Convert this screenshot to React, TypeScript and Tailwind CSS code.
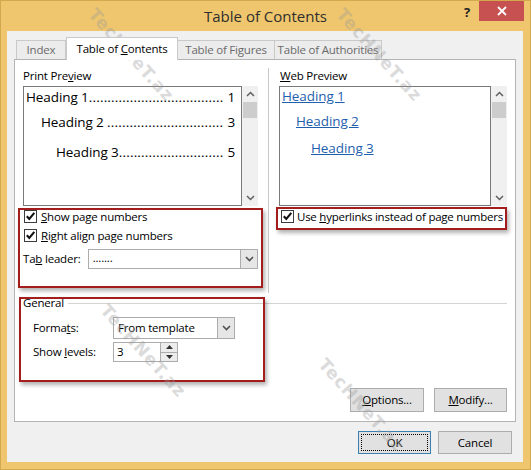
import React from "react";

function Check() {
  return (
    <span className="w-[13px] h-[13px] border border-[#3c3c3c] bg-white flex items-center justify-center shrink-0">
      <svg width="11" height="11" viewBox="0 0 11 11">
        <path d="M1.8 5.2 L4.3 7.9 L9.3 1.9" stroke="#111" strokeWidth="2.1" fill="none" />
      </svg>
    </span>
  );
}

function Chevron({ up = false }: { up?: boolean }) {
  return (
    <svg width="9" height="6" viewBox="0 0 9 6">
      <path
        d={up ? "M1 5 L4.5 1.5 L8 5" : "M1 1 L4.5 4.5 L8 1"}
        stroke="#606060"
        strokeWidth="1.5"
        fill="none"
      />
    </svg>
  );
}

function ScrollBar() {
  return (
    <div className="w-[16px] bg-[#f0f0f0] flex flex-col">
      <div className="h-[16px] flex items-center justify-center">
        <Chevron up />
      </div>
      <div className="h-[16px] bg-[#cdcdcd] mx-[1px]" />
      <div className="flex-1" />
      <div className="h-[16px] flex items-center justify-center">
        <Chevron />
      </div>
    </div>
  );
}

function DropBtn() {
  return (
    <div className="w-[17px] bg-[#e6e6e6] border-l border-[#acacac] flex items-center justify-center">
      <svg width="9" height="6" viewBox="0 0 9 6">
        <path d="M1 1 L4.5 4.5 L8 1" stroke="#505050" strokeWidth="1.6" fill="none" />
      </svg>
    </div>
  );
}

function Dots({ n }: { n: number }) {
  return (
    <span className="flex-1 min-w-0 whitespace-nowrap overflow-hidden tracking-[0.2px]">
      {".".repeat(n)}
    </span>
  );
}

function Watermark({ cls }: { cls: string }) {
  return (
    <div
      className={
        "absolute pointer-events-none origin-top-left rotate-[48deg] text-[17px] font-bold tracking-[1px] text-[#9a9a9a] opacity-35 font-['DejaVu_Sans',sans-serif] " +
        cls
      }
    >
      TecHNeT.az
    </div>
  );
}

export default function App() {
  return (
    <div className="relative w-[531px] h-[470px] bg-[#efc66d] border border-[#d3a94e] font-['Open_Sans','Noto_Sans',sans-serif] text-[11.5px] tracking-[-0.2px] text-black overflow-hidden whitespace-nowrap">
      {/* Title bar */}
      <div className="h-[30px] grid grid-cols-[1fr_auto_1fr]">
        <div />
        <div className="pt-[4px] text-[15px] tracking-normal leading-[22px] text-[#2e2e2e]">Table of Contents</div>
        <div className="flex justify-end items-start">
          <div className="mr-[9px] mt-[4px] text-[13px] font-bold leading-[14px] text-[#222]">?</div>
          <div className="w-[45px] h-[20px] bg-[#c75050] flex items-center justify-center mr-[6px]">
            <svg width="10" height="10" viewBox="0 0 10 10">
              <path d="M1 1 L9 9 M9 1 L1 9" stroke="#fff" strokeWidth="1.8" />
            </svg>
          </div>
        </div>
      </div>

      {/* Client area */}
      <div className="ml-[6px] w-[516px] h-[431px] bg-[#f0f0f0] pl-[7px] pr-[7px] pt-[6px]">
        {/* Tabs */}
        <div className="h-[22px] flex items-end pl-[2px]">
          <div className="h-[19px] w-[50px] border border-b-0 border-[#c9c9c9] bg-[#ececec] text-[#6a6a6a] flex items-center justify-center">
            <span>Index</span>
          </div>
          <div className="relative z-10 h-[23px] -mb-[1px] w-[112px] border border-b-0 border-[#c9c9c9] bg-white flex items-start pt-[2px] justify-center">
            <span>
              Table of <span className="underline">C</span>ontents
            </span>
          </div>
          <div className="h-[19px] w-[97px] border border-b-0 border-l-0 border-[#c9c9c9] bg-[#ececec] text-[#6a6a6a] flex items-center justify-center">
            <span>Table of Figures</span>
          </div>
          <div className="h-[19px] w-[107px] border border-b-0 border-l-0 border-[#c9c9c9] bg-[#ececec] text-[#6a6a6a] flex items-center justify-center">
            <span>Table of Authorities</span>
          </div>
        </div>

        {/* Panel */}
        <div className="h-[363px] border border-[#b4b4b4] bg-white pt-[8px] pl-[8px] pr-[8px]">
          <div className="flex h-[225px]">
            {/* Left column */}
            <div className="w-[235px] flex flex-col">
              <div className="leading-[15px] mb-[3px]">
                Print Pre<span className="underline">v</span>iew
              </div>
              <div className="flex h-[120px]">
                <div className="w-[219px] border border-[#7a7a7a] bg-white pl-[2px] pr-[6px] text-[13.5px] tracking-[-0.1px] leading-[18px]">
                  <div className="flex h-[20px] items-center">
                    <span>Heading 1</span>
                    <Dots n={60} />
                    <span>&nbsp;1</span>
                  </div>
                  <div className="flex mt-[5px] h-[20px] pl-[15px] items-center">
                    <span>Heading 2&nbsp;</span>
                    <Dots n={60} />
                    <span>&nbsp;3</span>
                  </div>
                  <div className="flex mt-[10px] h-[20px] pl-[30px] items-center">
                    <span>Heading 3</span>
                    <Dots n={60} />
                    <span>&nbsp;5</span>
                  </div>
                </div>
                <ScrollBar />
              </div>
              <div className="mt-[4px] h-[13px] flex items-center gap-[4px] pl-[1px]">
                <Check />
                <span className="leading-[13px]">
                  <span className="underline">S</span>how page numbers
                </span>
              </div>
              <div className="mt-[6px] h-[13px] flex items-center gap-[4px] pl-[1px]">
                <Check />
                <span className="leading-[13px]">
                  <span className="underline">R</span>ight align page numbers
                </span>
              </div>
              <div className="mt-[7px] h-[20px] flex items-center">
                <span className="w-[65px]">
                  Ta<span className="underline">b</span> leader:
                </span>
                <div className="w-[171px] h-[20px] border border-[#acacac] bg-white flex">
                  <div className="flex-1 pl-[4px] leading-[16px]">.......</div>
                  <DropBtn />
                </div>
              </div>
            </div>

            {/* Separator */}
            <div className="ml-[10px] w-px bg-[#c8c8c8]" />

            {/* Right column */}
            <div className="ml-[10px] w-[228px] flex flex-col">
              <div className="leading-[15px] mb-[3px] pl-[1px]">
                <span className="underline">W</span>eb Preview
              </div>
              <div className="flex h-[120px]">
                <div className="w-[212px] border border-[#7a7a7a] bg-white pl-[2px] text-[13.5px] tracking-[-0.1px] leading-[18px] text-[#1f5fae]">
                  <div className="h-[18px]">
                    <span className="underline">Heading 1</span>
                  </div>
                  <div className="h-[18px] mt-[7px] pl-[14px]">
                    <span className="underline">Heading 2</span>
                  </div>
                  <div className="h-[18px] mt-[9px] pl-[29px]">
                    <span className="underline">Heading 3</span>
                  </div>
                </div>
                <ScrollBar />
              </div>
              <div className="mt-[4px] h-[13px] flex items-center gap-[3px] pl-[2px]">
                <Check />
                <span className="leading-[13px] tracking-[-0.25px]">
                  Use <span className="underline">h</span>yperlinks instead of page numbers
                </span>
              </div>
            </div>
          </div>

          {/* General group */}
          <div className="mt-[3px] h-[14px] flex items-center">
            <span className="leading-[14px]">General</span>
            <div className="flex-1 ml-[4px] h-px bg-[#d4d4d4]" />
          </div>
          <div className="mt-[7px] h-[22px] flex items-center pl-[10px]">
            <span className="w-[80px]">
              Forma<span className="underline">t</span>s:
            </span>
            <div className="w-[122px] h-[22px] border border-[#acacac] bg-white flex">
              <div className="flex-1 pl-[4px] leading-[20px]">From template</div>
              <DropBtn />
            </div>
          </div>
          <div className="mt-[3px] h-[20px] flex items-center pl-[10px]">
            <span className="w-[80px]">
              Show <span className="underline">l</span>evels:
            </span>
            <div className="w-[65px] h-[20px] border border-[#acacac] bg-white flex">
              <div className="flex-1 pl-[3px] leading-[18px]">3</div>
              <div className="w-[17px] flex flex-col border-l border-[#acacac]">
                <div className="flex-1 bg-[#ececec] border-b border-[#acacac] flex items-center justify-center">
                  <svg width="7" height="4" viewBox="0 0 7 4">
                    <path d="M0 4 L3.5 0 L7 4 Z" fill="#333" />
                  </svg>
                </div>
                <div className="flex-1 bg-[#ececec] flex items-center justify-center">
                  <svg width="7" height="4" viewBox="0 0 7 4">
                    <path d="M0 0 L3.5 4 L7 0 Z" fill="#333" />
                  </svg>
                </div>
              </div>
            </div>
          </div>

          {/* Options / Modify */}
          <div className="mt-[26px] flex justify-end gap-[10px]">
            <div className="w-[74px] h-[24px] border border-[#adadad] bg-[#e1e1e1] flex items-center justify-center">
              <span>
                <span className="underline">O</span>ptions...
              </span>
            </div>
            <div className="w-[73px] h-[24px] border border-[#adadad] bg-[#e1e1e1] flex items-center justify-center">
              <span>
                <span className="underline">M</span>odify...
              </span>
            </div>
          </div>
        </div>

        {/* OK / Cancel */}
        <div className="mt-[9px] flex justify-end gap-[7px] pr-[4px]">
          <div className="w-[73px] h-[23px] border border-[#3c7fb1] bg-[#e1e1e1] p-[2px]">
            <div className="w-full h-full border border-dotted border-black flex items-center justify-center">
              <span>OK</span>
            </div>
          </div>
          <div className="w-[74px] h-[23px] border border-[#adadad] bg-[#e1e1e1] flex items-center justify-center">
            <span>Cancel</span>
          </div>
        </div>
      </div>

      {/* Red annotation boxes */}
      <div className="absolute left-[17px] top-[207px] w-[245px] h-[80px] border-2 border-[#a31d1d] shadow-[2px_3px_4px_rgba(0,0,0,0.3)] pointer-events-none" />
      <div className="absolute left-[275px] top-[206px] w-[231px] h-[23px] border-2 border-[#a31d1d] shadow-[2px_3px_4px_rgba(0,0,0,0.3)] pointer-events-none" />
      <div className="absolute left-[18px] top-[296px] w-[246px] h-[85px] border-2 border-[#a31d1d] shadow-[2px_3px_4px_rgba(0,0,0,0.3)] pointer-events-none" />

      {/* Watermarks */}
      <Watermark cls="left-[100px] top-[2px]" />
      <Watermark cls="left-[348px] top-[2px]" />
      <Watermark cls="left-[112px] top-[298px]" />
      <Watermark cls="left-[330px] top-[352px]" />
    </div>
  );
}
